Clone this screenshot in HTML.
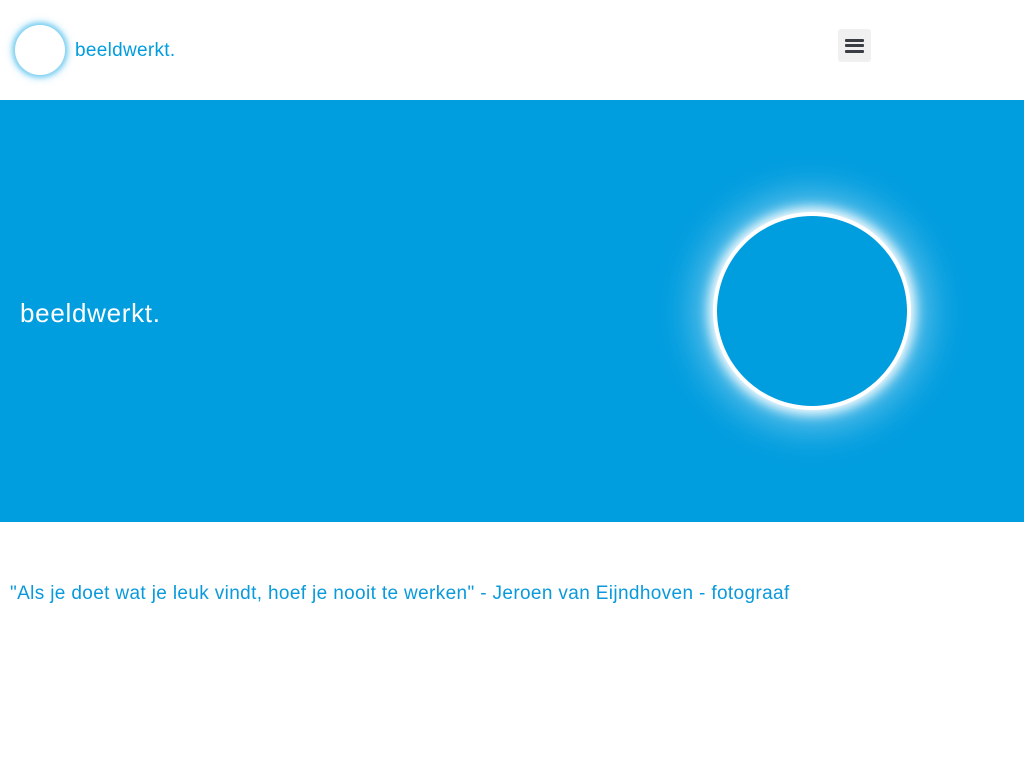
<!DOCTYPE html>
<html><head><style>
body{margin:0;width:1024px;height:768px;background:#fff;font-family:"Liberation Sans",sans-serif;position:relative;overflow:hidden}
.logo{position:absolute;left:15px;top:25px;width:50px;height:50px;border-radius:50%;background:#fff;box-shadow:0 0 4px 2px #7fd0f0,0 0 8px 3px rgba(0,160,230,.35)}
.lt{position:absolute;left:75px;top:40px;font-size:19px;color:#009ddf;letter-spacing:.3px}
.menu{position:absolute;left:838px;top:29px;width:33px;height:33px;background:#f0f0f0;border-radius:3px}
.menu i{position:absolute;left:7px;width:19px;height:3px;background:#3a3e44;border-radius:1px}
.hero{position:absolute;left:0;top:100px;width:1024px;height:422px;background:#009ddf;overflow:hidden}
.ht{position:absolute;left:20px;top:198px;font-size:26px;color:#fff;letter-spacing:.7px}
.c{position:absolute;left:717px;top:116px;width:190px;height:190px;border-radius:50%;background:#009ddf;box-shadow:0 0 0 4px #fff,0 0 12px 8px #fff,0 0 40px 20px rgba(255,255,255,.45)}
.q{position:absolute;left:10px;top:583px;font-size:19px;color:#0a9adb;letter-spacing:.36px}
</style></head><body>
<div class="logo"></div><div class="lt">beeldwerkt.</div>
<div class="menu"><i style="top:10px"></i><i style="top:15px"></i><i style="top:21px"></i></div>
<div class="hero"><div class="ht">beeldwerkt.</div><div class="c"></div></div>
<div class="q">"Als je doet wat je leuk vindt, hoef je nooit te werken" - Jeroen van Eijndhoven - fotograaf</div>
</body></html>
